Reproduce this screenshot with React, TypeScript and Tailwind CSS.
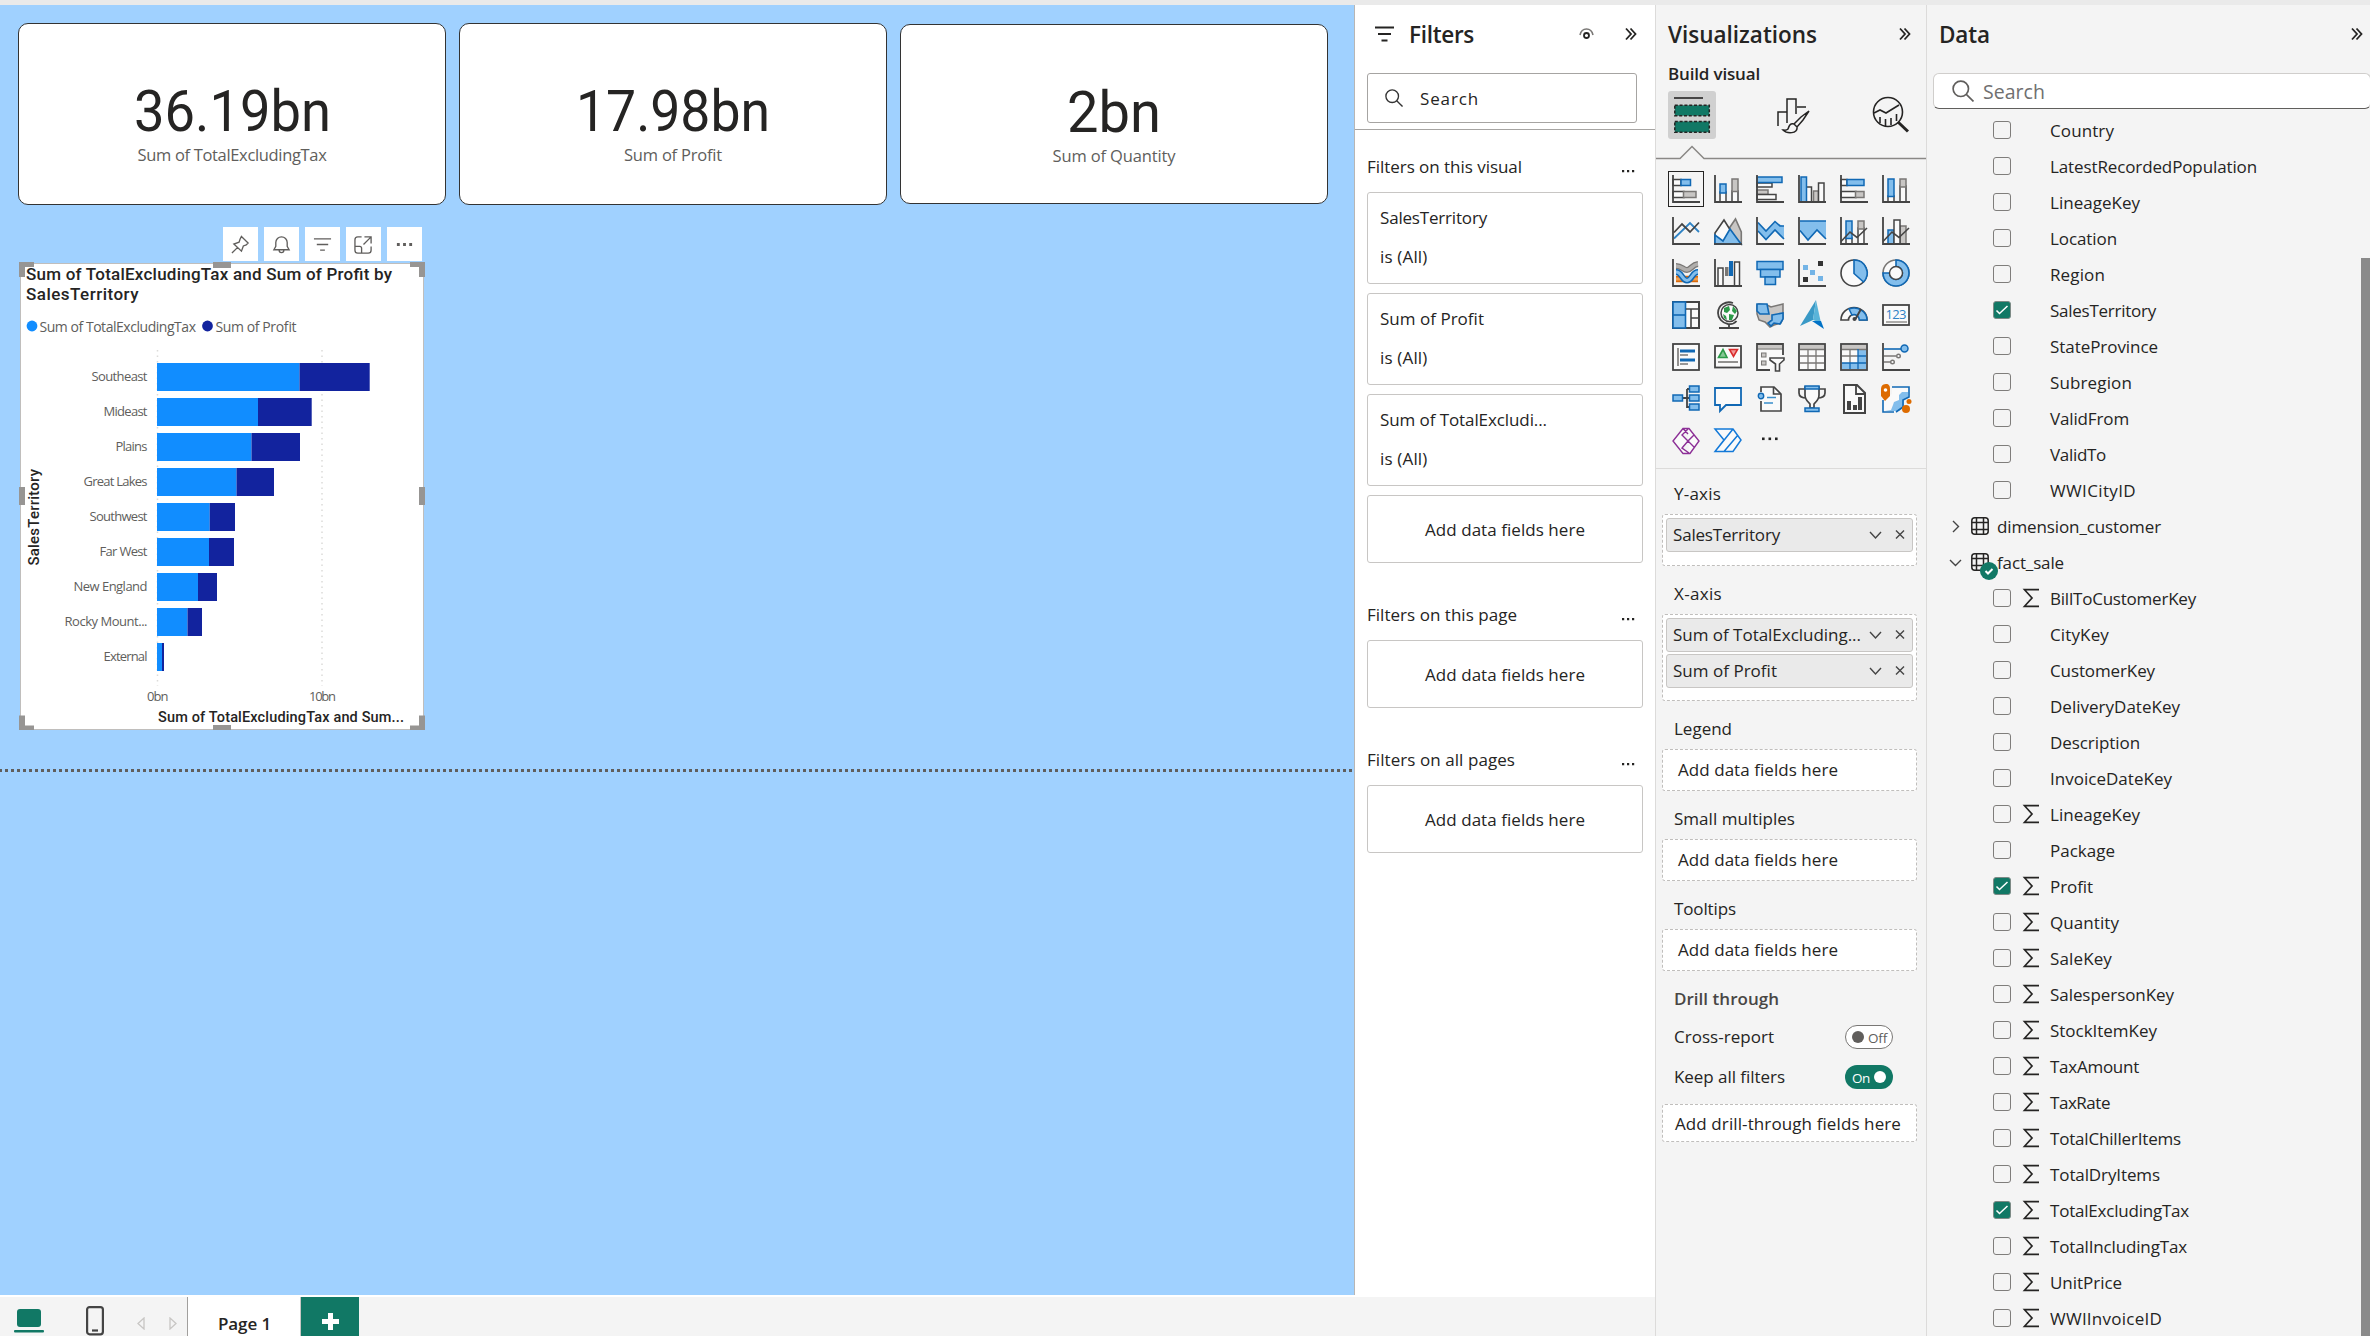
import React, { useLayoutEffect, useRef, useState } from "react";

type FitProps = { w: number; className?: string; stretch?: boolean; children: string };

/* Single-line text that is tracked (or stretched) to an exact width. */
function Fit({ w, className = "", stretch = false, children }: FitProps) {
  const ref = useRef<HTMLSpanElement>(null);
  const [style, setStyle] = useState<React.CSSProperties>({});
  useLayoutEffect(() => {
    const el = ref.current;
    if (!el) return;
    const natural = el.getBoundingClientRect().width;
    setStyle(
      stretch
        ? { transform: `scaleX(${w / natural})` }
        : { letterSpacing: `${(w - natural) / children.length}px` }
    );
  }, []);
  return (
    <span className={"inline-block whitespace-nowrap " + className} style={{ width: w }}>
      <span ref={ref} className="inline-block origin-left whitespace-nowrap" style={style}>
        {children}
      </span>
    </span>
  );
}

const K = "#444444";
const BF = "#83beec";
const BS = "#1068b4";
const GF = "#c8c6c4";
const GS = "#797775";
const W = "#fafafa";

const Axis = () => <path d="M1 0V27H28" fill="none" stroke={K} strokeWidth="1.8" />;
type RP = { b: [number, number, number, number]; c?: "w" | "b" | "g" };
const R = ({ b, c = "w" }: RP) => (
  <rect
    x={b[0]}
    y={b[1]}
    width={b[2]}
    height={b[3]}
    fill={c === "b" ? BF : c === "g" ? GF : W}
    stroke={c === "b" ? BS : c === "g" ? GS : K}
    strokeWidth="1.5"
  />
);
const P = ({ d, f = "none", s = K, sw = 1.6 }: { d: string; f?: string; s?: string; sw?: number }) => (
  <path d={d} fill={f} stroke={s} strokeWidth={sw} />
);

const visualIcons: React.ReactNode[] = [
  <><R b={[1, 4.5, 8, 6]} /><R b={[9, 4.5, 9.5, 6]} c="b" /><R b={[1, 16.5, 11, 6]} /><R b={[11.5, 16.5, 12.5, 6]} c="g" /><Axis /></>,
  <><R b={[6, 17, 6, 10]} /><R b={[6, 9, 6, 9]} c="b" /><R b={[18, 16, 6, 11]} /><R b={[18, 4, 6, 12.5]} c="g" /><Axis /></>,
  <><R b={[1, 8, 15, 4]} /><R b={[1, 2, 25, 5.5]} c="b" /><R b={[1, 15, 11, 4.5]} c="g" /><R b={[1, 19.5, 19, 5]} /><Axis /></>,
  <><R b={[8, 12, 5.5, 15]} /><R b={[3, 2, 5.5, 25]} c="b" /><R b={[15.5, 16, 5, 11]} c="g" /><R b={[20.5, 8, 5.5, 19]} /><Axis /></>,
  <><R b={[1, 4.5, 6, 6]} /><R b={[7, 4.5, 17, 6]} c="b" /><R b={[1, 16.5, 15, 6]} /><R b={[15.5, 16.5, 8.5, 6]} c="g" /><Axis /></>,
  <><R b={[6, 21, 6, 6]} /><R b={[6, 4, 6, 17.5]} c="b" /><R b={[18, 11, 6, 16]} /><R b={[18, 4, 6, 8]} c="g" /><Axis /></>,
  <><P d="M2 21.5 18 6l9 9" s="#2f83c5" sw={1.8} /><P d="M2 15.5 10 7l8 8 9-9.500" sw={1.8} /><Axis /></>,
  <><P d="M14 13 21.500 2 27.300 15V27Z" f={GF} s={GS} /><P d="M1 27V16L10 3 25 27Z" f={W} /><P d="M1 27V18l8 6 7-12 11 15Z" f={BF} s={BS} /><P d="M0 27H28" sw={1.8} /></>,
  <><path d="M2 6 10 14 19 5 28 9.500V22L19 13l-9 9.500L2 14Z" fill={BF} /><P d="M2 5.500 10 14 19 4.500 24 9h4M2 14l8 8.500L19 13l9 9" s={BS} /><Axis /></>,
  <><path d="M2 4H28V22L19 13l-9 10L2 14Z" fill={BF} /><P d="M2 4H28M2 13.500 10 23 19 13l9 9" s={BS} /><Axis /></>,
  <><R b={[6, 21, 6, 6]} /><R b={[6, 4, 6, 17.5]} c="b" /><R b={[18, 11, 6, 16]} /><R b={[18, 4, 6, 8]} c="g" /><P d="M1 24.500 10 15l7 5.500L27 11" /><Axis /></>,
  <><R b={[6, 13, 6, 14]} c="b" /><R b={[18, 9, 6, 18]} c="g" /><R b={[12, 3, 6, 24]} /><P d="M1 24.500 10 15l7 5.500L27 11" /><Axis /></>,
  <><P d="M4 20H26" s="#d9690a" sw={6.5} /><P d="M4 20H26" s="#f0a050" sw={3} /><P d="M4 7C10 7 11 11 15 11S20 5.500 26 5" s={GS} sw={6} /><P d="M4 7C10 7 11 11 15 11S20 5.500 26 5" s="#b0aeac" sw={3.5} /><P d="M4 13C10 13 10 21.500 15 21.500S20 13 26 13" s={BS} sw={6} /><P d="M4 13C10 13 10 21.500 15 21.500S20 13 26 13" s={BF} sw={3} /><Axis /></>,
  <><R b={[4, 9, 5, 18]} /><rect x="11" y="8" width="3.500" height="9" fill={GS} /><rect x="15" y="2" width="4" height="15" fill={BS} /><R b={[20.5, 3, 5, 24]} /><Axis /></>,
  <><R b={[1, 2.5, 26, 8]} c="b" /><R b={[4.5, 10.5, 19.5, 7.5]} c="b" /><R b={[9, 18, 10.5, 7.5]} c="b" /></>,
  <><rect x="5" y="6" width="5" height="5" fill="#74b4e6" /><rect x="12" y="11" width="5" height="5" fill="#74b4e6" /><rect x="20" y="17" width="5" height="5" fill="#74b4e6" /><rect x="20" y="2" width="5" height="5" fill="#333" /><rect x="5" y="18" width="5" height="5" fill="#333" /><Axis /></>,
  <><circle cx="14" cy="14" r="13" fill={W} stroke={K} strokeWidth="1.6" /><P d="M14 1A13 13 0 0 1 23.500 23L14 14.500Z" f={BF} s={BS} /></>,
  <><circle cx="14" cy="14" r="13" fill={W} stroke={GS} strokeWidth="1.6" /><P d="M14 1A13 13 0 1 1 1 14H7.500A6.500 6.500 0 1 0 14 7.500Z" f={BF} s={BS} /><circle cx="14" cy="14" r="6.500" fill={W} stroke={K} strokeWidth="1.400" /></>,
  <><rect x="1" y="1" width="26" height="26" fill={W} stroke={K} strokeWidth="2" /><rect x="1" y="1" width="12.500" height="26" fill={BF} stroke={BS} strokeWidth="1.600" /><P d="M1 14H13" s={BS} /><P d="M14 8H27M19 8V27M19 17H27" /></>,
  <><circle cx="15.500" cy="12" r="8.500" fill={W} stroke={K} strokeWidth="1.500" /><path d="M10 7l5-2 1 4-3 3-3-1zM19 5l4 5-2 3-3-3zM15 13l5 1-2 5h-3zM9 13l3 2 1 4-3-2z" fill="#2c9a48" /><P d="M19 2C12-.500 4 4 4 12c0 5 4 10 10 11 4 .500 7-1 8.500-3M15 23v3M5 27H25" sw={1.8} /></>,
  <><path d="M1 4 3 3 11 4 15 6 27 3V17L25 22 18 24 14 26 9 21 3 19 1 13Z" fill={GF} stroke={GS} strokeWidth="1.500" /><P d="M1 3H11L13 13H4L1 10Z" f={BF} s={BS} /><P d="M16 14 27 12V18L24 23 18 22 15 25 12 22 16 19Z" f={BF} s={BS} /></>,
  <><path d="M18-1 2 25 15 19Z" fill="#3999c6" /><path d="M18-1 15 19 23 22Z" fill="#59b4d9" /><path d="M14 20 23 20 26 28Z" fill="#0072c6" /></>,
  <><path d="M1 19A13 12.500 0 0 1 27 19H19.500A5.500 5.500 0 0 0 8.500 19Z" fill={W} stroke={K} strokeWidth="1.700" /><path d="M9 8A13 12 0 0 1 27 19H19.500A5.500 5.500 0 0 0 12 14Z" fill={BF} stroke={BS} strokeWidth="1.500" /><path d="M21 8 15.500 18" stroke={K} strokeWidth="2" /><circle cx="14.500" cy="18" r="2" fill={K} /></>,
  <><rect x="1" y="4" width="26" height="20" fill={W} stroke={K} strokeWidth="1.800" /><text x="3.500" y="18" fontSize="13" textLength="21" fontFamily="Open Sans, sans-serif" fill="#2f83c5">123</text><P d="M4 21H25" s={GS} sw={1.2} /></>,
  <><rect x="1" y="1" width="26" height="26" fill={W} stroke={K} strokeWidth="1.800" /><P d="M6 5V23" s={GS} /><P d="M8 8H23M8 17H23" s={BS} sw={3} /><P d="M8 12H16M8 21H16" s={GS} /></>,
  <><rect x="1" y="3" width="26" height="21.500" fill={W} stroke={K} strokeWidth="1.800" /><P d="M4.500 14.500 9 6.500 13 14.500Z" f="#86c795" s="#2c9a48" /><P d="M15.500 6.500H23.500L19.500 13.500Z" f="#f19a9a" s="#d92b2b" /><P d="M4 19H24" s={GS} /></>,
  <><path d="M14 27H1V1H27V12" fill={W} stroke={K} strokeWidth="1.800" /><rect x="2" y="2" width="24" height="3.500" fill={GF} /><P d="M2 6H26" s={GS} sw={1.2} /><rect x="5.500" y="10" width="4.500" height="4" fill={GF} stroke={GS} /><rect x="5.500" y="18" width="4.500" height="4" fill={GF} stroke={GS} /><P d="M14 15H28V17L23.500 21V28H19.500V21L14 17Z" f={W} /></>,
  <><rect x="1" y="1" width="26" height="26" fill={W} stroke={K} strokeWidth="1.800" /><rect x="2" y="2" width="24" height="4" fill={GF} /><P d="M2 6.500H26M2 13H26M2 20H26M10 6V26M18 6V26" s={GS} sw={1.3} /></>,
  <><rect x="1" y="1" width="26" height="26" fill={W} stroke={K} strokeWidth="1.800" /><rect x="2" y="2" width="24" height="4" fill={GF} /><path d="M18 6.500H26V26H2V20H18Z" fill={BF} /><P d="M2 6.500H26M2 13H18M10 6V20" s={GS} sw={1.3} /><P d="M18 6V26M2 20H26M18 13H26M10 20V26" s={BS} sw={1.3} /></>,
  <><P d="M2 6H19" s={BS} /><circle cx="22.500" cy="5.500" r="3.500" fill={BF} stroke={BS} strokeWidth="1.500" /><P d="M2 13H14M2 19H9" s={GS} /><circle cx="16.500" cy="13" r="1.800" fill={W} stroke={GS} strokeWidth="1.400" /><circle cx="10.500" cy="19" r="1.800" fill={W} stroke={GS} strokeWidth="1.400" /><Axis /></>,
  <><P d="M10 13H17M15 4V23M15 4H18M15 22H18" sw={1.8} /><R b={[1, 10, 9.5, 6]} c="b" /><R b={[17.5, 1, 9.5, 6]} c="b" /><R b={[17.5, 10, 9.5, 6]} c="b" /><R b={[17.5, 19, 9.5, 6]} c="b" /></>,
  <P d="M1 3H27V20H12L6 26V20H1Z" f={W} s={BS} sw={1.8} />,
  <><path d="M5 7V2H18L25 9V26H5V16" fill={W} stroke={K} strokeWidth="1.700" /><P d="M17.500 2V9H25" /><circle cx="5" cy="11" r="2.700" fill={BF} stroke={BS} strokeWidth="1.400" /><P d="M11 12.500H20M8 18H17" s="#3a8ecb" /></>,
  <><P d="M8 4H1V8C1 12 4 13 9 13M20 4H27V8C27 12 24 13 19 13" sw={1.7} /><P d="M7 2H21V10C21 16 16 18 16 19V23H12V19C12 18 7 16 7 10Z" f={W} sw={1.7} /><R b={[7, 1, 14, 3]} c="b" /><R b={[7, 23, 14, 3.5]} c="b" /></>,
  <><path d="M4 0H17L25 8V28H4Z" fill={W} stroke={K} strokeWidth="2" /><P d="M16 0V9H25" sw={1.8} /><path d="M7 16h4v9H7zM13 20h4v5h-4zM18 12h4v13h-4z" fill={K} /></>,
  <><path d="M1 14V27H14L18 25V17L22 14V9L27 6V1H10V9Z" fill={W} /><path d="M11 20 12 17 17 15V10L20 7H26V12L22 15V22L17 26H3L9 25Z" fill={BF} /><P d="M1 15V27H12M10 2H27V12L21 15V22L14 27" s={BS} /><path d="M4-1C0-1-1 2-1 4V11L3 16 8 11V4C8 1 7-1 4-1Z" fill="#dd6b00" /><circle cx="3.500" cy="5" r="1.800" fill="#fff" /><circle cx="27" cy="16.500" r="2.500" fill="#dd6b00" /><circle cx="24" cy="24" r="4" fill="#dd6b00" /></>,
  <P d="M11 1.500H17L27 14 18 26.500H11L1 14ZM16 2 10 8 16 14 10 21 17 26M10 8 22 20M10 21 16 14 22 8M11 1.500 16 7" f={W} s="#8c2f96" sw={1.4} />,
  <P d="M1 2H19L27 13 19 24.500H1L10 13ZM19 2 1 24.500M24 8 10 24.500" f={W} s="#1379d8" sw={1.5} />,
  <><rect x="6" y="10.500" width="2.600" height="2.600" fill="#222" /><rect x="12.500" y="10.500" width="2.600" height="2.600" fill="#222" /><rect x="19" y="10.500" width="2.600" height="2.600" fill="#222" /></>,
];

function Chevrons() {
  return (
    <svg width="12" height="14" viewBox="0 0 12 14" fill="none" stroke="#252423" strokeWidth="1.8">
      <path d="M1 1.500 6 7 1 12.500M5.500 1.500 10.500 7 5.500 12.500" />
    </svg>
  );
}

function SearchIcon({ size, color }: { size: number; color: string }) {
  return (
    <svg width={size} height={size} viewBox="0 0 20 20" fill="none" stroke={color} strokeWidth="1.5">
      <circle cx="8" cy="8" r="7" />
      <path d="M13 13 19.500 19.500" />
    </svg>
  );
}

function KpiCard({ value, vw, label, lw, className = "" }: { value: string; vw: number; label: string; lw: number; className?: string }) {
  return (
    <div className={"flex w-[428px] flex-col items-center rounded-[10px] border border-[#333] bg-white " + className}>
      <Fit w={vw} stretch className="mt-[57px] h-[60px] font-[Roboto,sans-serif] text-[58px] leading-[60px] text-[#252423]">{value}</Fit>
      <Fit w={lw} className="mt-[3px] text-[16.5px] leading-[22px] text-[#605e5c]">{label}</Fit>
    </div>
  );
}

const bars: [string, number, number, number][] = [
  ["Southeast", 56, 299.5, 369.7],
  ["Mideast", 44, 258, 311.7],
  ["Plains", 32, 251.5, 300],
  ["Great Lakes", 64, 236.5, 274],
  ["Southwest", 58, 209.7, 235],
  ["Far West", 48, 209, 234],
  ["New England", 74, 198, 217],
  ["Rocky Mount...", 83, 187.5, 202],
  ["External", 44, 162, 164],
];

function BarChart() {
  const din = "Roboto, sans-serif";
  const ui = "Open Sans, sans-serif";
  return (
    <svg width="406" height="468" viewBox="19 262 406 468" className="block">
      <rect x="20.500" y="263.500" width="403" height="466" fill="#fff" stroke="#c0bebc" />
      <g fill="#979593">
        <path d="M19 262h15v5h-9v10h-6zM425 262h-15v5h9v10h6zM19 731h15v-5.500h-9v-10h-6zM425 731h-15v-5.500h9v-10h6z" />
        <path d="M213 262h18v6h-18zM213 725h18v6h-18zM19 487h6v18h-6zM419 487h6v18h-6z" />
      </g>
      <g fontFamily={din} fill="#252423" fontWeight="500">
        <text x="26" y="280" fontSize="17" textLength="366">Sum of TotalExcludingTax and Sum of Profit by</text>
        <text x="26" y="300" fontSize="17" textLength="112.500">SalesTerritory</text>
        <text x="158" y="722" fontSize="14.500" textLength="246">Sum of TotalExcludingTax and Sum...</text>
        <text transform="translate(39 565.500) rotate(-90)" fontSize="15" textLength="96.500">SalesTerritory</text>
      </g>
      <circle cx="32" cy="326" r="5.400" fill="#118dff" />
      <circle cx="207.500" cy="326" r="5.400" fill="#12239e" />
      <path d="M157.500 350V686M322 350V686" stroke="#dcdbd9" strokeWidth="1.500" strokeDasharray="1.500 4" />
      <g fontFamily={ui} fill="#605e5c">
        <text x="39.500" y="331.500" fontSize="14" textLength="156.500">Sum of TotalExcludingTax</text>
        <text x="215.500" y="331.500" fontSize="14" textLength="81">Sum of Profit</text>
        {bars.map(([label, w], i) => (
          <text key={label} x={147.5 - w} y={381.3 + i * 35} fontSize="13" textLength={w}>{label}</text>
        ))}
        <text x="147" y="701" fontSize="13" textLength="21.500">0bn</text>
        <text x="309" y="701" fontSize="13" textLength="27">10bn</text>
      </g>
      {bars.map(([label, , a, b], i) => (
        <g key={label}>
          <rect x="157" y={363 + i * 35} width={a - 157} height="28" fill="#118dff" />
          <rect x={a} y={363 + i * 35} width={b - a} height="28" fill="#12239e" />
        </g>
      ))}
    </svg>
  );
}

const toolbar: React.ReactNode[] = [
  <path d="M1 19 7 13M11 1.500 18 8.500 16 10.500 13 11.500 11 17 3 9.500 8.500 7.500 9.500 4.500Z" />,
  <path d="M2 15.500H18L16 12V8A6 6 0 0 0 4 8V12ZM7.500 16A2.500 2.500 0 0 0 12.500 16" />,
  <path d="M1 4H19M4 10H16M7.500 16H12.500" />,
  <path d="M8 2H4Q1 2 1 5V16Q1 19 4 19H15Q18 19 18 16V12M1 12H6Q8 12 8 14V19M11 2H18V9M18 2 10 10" />,
  <path d="M2 10H5M8.500 10H11.500M15 10H18" strokeWidth="3" />,
];

function FilterCard({ name, w }: { name: string; w: number }) {
  return (
    <div className="mb-[9px] flex h-[92px] w-[276px] flex-col rounded-[3px] border border-[#c8c6c4] bg-white pl-[12px]">
      <Fit w={w} className="mt-[13px] h-[24px] leading-[24px]">{name}</Fit>
      <Fit w={47.5} className="mt-[15px] h-[24px] leading-[24px]">is (All)</Fit>
    </div>
  );
}

function AddBox() {
  return (
    <div className="flex h-[68px] w-[276px] items-center justify-center rounded-[3px] border border-[#c8c6c4] bg-white pt-px">
      <Fit w={160}>Add data fields here</Fit>
    </div>
  );
}

function FilterHeading({ text, w, className = "" }: { text: string; w: number; className?: string }) {
  return (
    <div className={"flex h-[24px] items-center justify-between pr-[20px] " + className}>
      <Fit w={w}>{text}</Fit>
      <svg width="13" height="3" viewBox="0 0 13 3" className="mt-[8px]"><path d="M0 0h2.200v2.200H0zM5 0h2.200v2.200H5zM10 0h2.200v2.200H10z" fill="#252423" /></svg>
    </div>
  );
}

function Pill({ text, w, className = "" }: { text: string; w: number; className?: string }) {
  return (
    <div className={"flex h-[34px] w-[247px] items-center rounded-[3px] border border-[#c8c6c4] bg-[#eaeaea] pr-[7px] pl-[6px] " + className}>
      <Fit w={w}>{text}</Fit>
      <svg width="36" height="12" viewBox="0 0 36 12" className="ml-auto" fill="none" stroke="#444" strokeWidth="1.400">
        <path d="M1 3 6.500 9 12 3M27 1.500 35 9.500M35 1.500 27 9.500" />
      </svg>
    </div>
  );
}

const dashed = "ml-[6px] w-[255px] rounded-[3px] border border-dashed border-[#c0bebc] bg-white";

function EmptyWell({ label, w }: { label: string; w: number }) {
  return (
    <>
      <Fit w={w} className="mt-[16px] ml-[18px] h-[24px] leading-[24px]">{label}</Fit>
      <div className={dashed + " mt-[8px] flex h-[42px] items-center pl-[15px]"}>
        <Fit w={160}>Add data fields here</Fit>
      </div>
    </>
  );
}

type Field = { n: string; w: number; on?: boolean; sum?: boolean };
const cityFields: Field[] = [
  { n: "Country", w: 64 },
  { n: "LatestRecordedPopulation", w: 207 },
  { n: "LineageKey", w: 90 },
  { n: "Location", w: 67 },
  { n: "Region", w: 55 },
  { n: "SalesTerritory", w: 106, on: true },
  { n: "StateProvince", w: 108 },
  { n: "Subregion", w: 82 },
  { n: "ValidFrom", w: 79 },
  { n: "ValidTo", w: 56 },
  { n: "WWICityID", w: 86 },
];
const saleFields: Field[] = [
  { n: "BillToCustomerKey", w: 146, sum: true },
  { n: "CityKey", w: 59 },
  { n: "CustomerKey", w: 105 },
  { n: "DeliveryDateKey", w: 130 },
  { n: "Description", w: 90 },
  { n: "InvoiceDateKey", w: 122 },
  { n: "LineageKey", w: 90, sum: true },
  { n: "Package", w: 65 },
  { n: "Profit", w: 43, sum: true, on: true },
  { n: "Quantity", w: 69, sum: true },
  { n: "SaleKey", w: 62, sum: true },
  { n: "SalespersonKey", w: 124, sum: true },
  { n: "StockItemKey", w: 107, sum: true },
  { n: "TaxAmount", w: 89, sum: true },
  { n: "TaxRate", w: 60, sum: true },
  { n: "TotalChillerItems", w: 131, sum: true },
  { n: "TotalDryItems", w: 110, sum: true },
  { n: "TotalExcludingTax", w: 139, sum: true, on: true },
  { n: "TotalIncludingTax", w: 137, sum: true },
  { n: "UnitPrice", w: 72, sum: true },
  { n: "WWIInvoiceID", w: 112, sum: true },
];

function FieldRow({ f }: { f: Field }) {
  return (
    <div className="flex h-[36px] shrink-0 items-center pl-[66px]">
      {f.on ? (
        <div className="flex h-[18px] w-[18px] items-center justify-center rounded-[3px] border border-[#7d8a86] bg-[#117865]">
          <svg width="14" height="12" viewBox="0 0 14 12" fill="none" stroke="#fff" strokeWidth="1.500"><path d="M1.500 6.500 4.500 9.500 12.500 2" /></svg>
        </div>
      ) : (
        <div className="h-[18px] w-[18px] rounded-[3px] border border-[#7f7d7b]" />
      )}
      <div className="ml-[11px] w-[28px]">
        {f.sum && (
          <svg width="18" height="20" viewBox="0 0 18 20" fill="none" stroke="#252423" strokeWidth="1.700"><path d="M17 1.700H2.500L10 10 2.500 18.300H17" /></svg>
        )}
      </div>
      <Fit w={f.w} className="mt-[2px]">{f.n}</Fit>
    </div>
  );
}

function TableRow({ name, w, open = false }: { name: string; w: number; open?: boolean }) {
  return (
    <div className="flex h-[36px] shrink-0 items-center pl-[22px]">
      <svg width="13" height="13" viewBox="0 0 13 13" fill="none" stroke="#444" strokeWidth="1.400">
        <path d={open ? "M1 4 6.500 9.500 12 4" : "M4 1 9.500 6.500 4 12"} />
      </svg>
      <div className="relative ml-[9px] h-[18px] w-[18px]">
        <svg width="18" height="18" viewBox="0 0 18 18" fill="none" stroke="#252423" strokeWidth="1.500"><rect x=".8" y=".8" width="16.400" height="16.400" rx="3" /><path d="M5.500 1V17M12.500 1V17M1 5.500H17M1 12.500H17" /></svg>
        {open && (
          <svg width="18" height="18" viewBox="0 0 18 18" className="absolute top-[9px] left-[9px]"><circle cx="9" cy="9" r="9" fill="#117865" /><path d="M5.500 9 8 11.500 12.500 7" fill="none" stroke="#fff" strokeWidth="2" /></svg>
        )}
      </div>
      <Fit w={w} className="mt-[2px] ml-[8px]">{name}</Fit>
    </div>
  );
}

export default function App() {
  return (
    <div className="flex h-[1336px] w-[2370px] flex-col overflow-hidden bg-[#f4f4f4] font-['Open_Sans',sans-serif] text-[17px] leading-[24px] text-[#252423]">
      <div className="h-[5px] shrink-0 bg-[#eaeaea]" />
      <div className="flex min-h-0 flex-1">
        <div className="flex w-[1655px] flex-col">
          <div className="flex h-[1290px]">
            <main className="flex w-[1354px] flex-col bg-[#a0d1ff]">
              <div className="mt-[18px] ml-[18px] flex h-[182px] gap-[13px]">
                <KpiCard value="36.19bn" vw={197} label="Sum of TotalExcludingTax" lw={189} />
                <KpiCard value="17.98bn" vw={194} label="Sum of Profit" lw={98} />
                <KpiCard value="2bn" vw={94} label="Sum of Quantity" lw={123} className="mt-px mb-px" />
              </div>
              <div className="mt-[22px] ml-[223px] flex gap-[6px]">
                {toolbar.map((icon, i) => (
                  <div key={i} className="flex h-[34px] w-[35px] items-center justify-center bg-white pt-px">
                    <svg width="19" height="19" viewBox="0 0 20 20" fill="none" stroke="#605e5c" strokeWidth="1.400">{icon}</svg>
                  </div>
                ))}
              </div>
              <div className="mt-[1px] ml-[19px]"><BarChart /></div>
              <div className="mt-[39px] h-[3px] bg-[repeating-linear-gradient(90deg,#605e5c_0_2px,transparent_2px_5px,#605e5c_5px_6px)]" />
            </main>
            <aside className="flex w-[301px] flex-col border-l border-[#b8b6b4] bg-white pl-[12px]">
              <div className="mt-[12px] flex h-[34px] items-center">
                <svg width="19" height="16" viewBox="0 0 19 16" className="ml-[8px]" stroke="#252423" strokeWidth="2"><path d="M0 1.500H19M3 8H16M6.500 14.500H12.500" /></svg>
                <Fit w={65} className="mt-[2px] ml-[15px] text-[22.5px] font-semibold">Filters</Fit>
                <svg width="15" height="12" viewBox="0 0 15 12" fill="none" className="ml-[105px]"><path d="M1 7C2 2.500 5 1 7.500 1S13 2.500 14 7" stroke="#797775" strokeWidth="1.600" /><circle cx="7.500" cy="7.500" r="2.500" stroke="#252423" strokeWidth="1.800" /></svg>
                <div className="ml-[31px]"><Chevrons /></div>
              </div>
              <div className="mt-[22px] flex h-[50px] w-[270px] items-center rounded-[3px] border border-[#a6a4a2] pl-[17px]">
                <SearchIcon size={18} color="#333" />
                <Fit w={59} className="mt-[2px] ml-[17px]">Search</Fit>
              </div>
              <div className="mt-[6px] -ml-[12px] h-px bg-[#a6a4a2]" />
              <FilterHeading text="Filters on this visual" w={155} className="mt-[25px]" />
              <div className="h-[13px]" />
              <FilterCard name="SalesTerritory" w={107} />
              <FilterCard name="Sum of Profit" w={104} />
              <FilterCard name="Sum of TotalExcludi..." w={167} />
              <AddBox />
              <FilterHeading text="Filters on this page" w={150} className="mt-[40px]" />
              <div className="h-[13px]" />
              <AddBox />
              <FilterHeading text="Filters on all pages" w={148} className="mt-[40px]" />
              <div className="h-[13px]" />
              <AddBox />
            </aside>
          </div>
          <div className="h-[2px] bg-white" />
          <footer className="flex h-[39px]">
            <div className="flex w-[188px] items-start border-r border-[#a19f9d]">
              <svg width="30" height="24" viewBox="0 0 30 24" className="mt-[12px] ml-[14px]" fill="#117865"><rect x="3" y="0" width="24" height="18" rx="3" /><rect x="0" y="21" width="30" height="2.500" rx="1" /></svg>
              <svg width="18" height="30" viewBox="0 0 18 30" className="mt-[9px] ml-[42px]" fill="none" stroke="#444" strokeWidth="2.200"><rect x="1.100" y="1.100" width="15.800" height="27.200" rx="2.500" /><path d="M6 24.500H12" /></svg>
              <svg width="8" height="13" viewBox="0 0 8 13" className="mt-[20px] ml-[33px]" fill="none" stroke="#c8c6c4" strokeWidth="1.300"><path d="M7 1V12L1 6.500Z" /></svg>
              <svg width="8" height="13" viewBox="0 0 8 13" className="mt-[20px] ml-[24px]" fill="none" stroke="#c8c6c4" strokeWidth="1.300"><path d="M1 1V12L7 6.500Z" /></svg>
            </div>
            <div className="w-[113px] border-r border-[#c8c6c4] bg-white pt-[15px] pl-[30px]">
              <Fit w={53} className="font-semibold">Page 1</Fit>
            </div>
            <div className="w-[58px] bg-[#117865] pt-[16px] pl-[21px]">
              <svg width="17" height="17" viewBox="0 0 17 17"><path d="M6 0h5v6h6v5h-6v6H6v-6H0V6h6z" fill="#fff" /></svg>
            </div>
          </footer>
        </div>

        <aside className="flex w-[271px] flex-col border-l border-[#dcdbda]">
          <div className="mt-[12px] flex h-[34px] items-center justify-between pr-[15px] pl-[12px]">
            <Fit w={149} className="mt-[2px] text-[22.5px] font-semibold">Visualizations</Fit>
            <Chevrons />
          </div>
          <Fit w={92} className="mt-[11px] ml-[12px] h-[24px] font-semibold">Build visual</Fit>
          <div className="mt-[5px] flex items-start pl-[12px]">
            <div className="h-[48px] w-[48px] rounded-[3px] bg-[#d0d0d0]">
              <svg width="48" height="48" viewBox="0 0 48 48"><path d="M6 7H35" stroke="#252423" strokeWidth="1.600" /><g fill="#117865" stroke="#252423" strokeWidth="1.500" strokeDasharray="3 1.800"><rect x="6.800" y="14.300" width="34.500" height="10.400" /><rect x="6.800" y="30.500" width="34.500" height="10.700" /></g></svg>
            </div>
            <svg width="36" height="38" viewBox="0 0 36 38" className="mt-[5px] ml-[59px]" fill="none" stroke="#252423" strokeWidth="1.500">
              <path d="M3 30V16H12V27M12 16V3H21V18M22 11H31M34 15 26 21 19 28 22 31 28 24ZM19 28C15 27 14 30 13 33 11 35 9 34 8 34 12 38 23 38 22 31" />
            </svg>
            <svg width="38" height="38" viewBox="0 0 38 38" className="mt-[4px] ml-[60px]" fill="none" stroke="#252423" strokeWidth="1.600">
              <circle cx="17" cy="17" r="14.500" /><path d="M3 18 9 15 15 18 28 10M9 22V28M14.500 24V31M20 23V30M25.500 19V26" /><path d="M27 27 37 36.500" strokeWidth="3" />
            </svg>
          </div>
          <svg width="270" height="15" viewBox="0 0 270 15" className="mt-[6px] block" fill="none" stroke="#8a8886" strokeWidth="1.500"><path d="M0 13.500H24L36 1.500 48 13.500H270" /></svg>
          <div className="mt-[11px] ml-[12px] grid w-[246px] grid-cols-6 gap-[6px]">
            {visualIcons.map((icon, i) => (
              <div key={i} className={"flex h-[36px] w-[36px] items-center justify-center border " + (i === 0 ? "border-[#252423]" : "border-transparent")}>
                <svg width="28" height="28" viewBox="0 0 28 28" overflow="visible">{icon}</svg>
              </div>
            ))}
          </div>
          <div className="mt-[9px] h-px bg-[#dcdbda]" />

          <Fit w={47} className="mt-[13px] ml-[18px] h-[24px]">Y-axis</Fit>
          <div className={dashed + " mt-[8px] h-[52px] px-[3px] pt-[3px]"}>
            <Pill text="SalesTerritory" w={107} />
          </div>
          <Fit w={48} className="mt-[16px] ml-[18px] h-[24px]">X-axis</Fit>
          <div className={dashed + " mt-[8px] h-[87px] px-[3px] pt-[3px]"}>
            <Pill text="Sum of TotalExcluding..." w={188} />
            <Pill text="Sum of Profit" w={104} className="mt-[2px]" />
          </div>
          <EmptyWell label="Legend" w={58} />
          <EmptyWell label="Small multiples" w={121} />
          <EmptyWell label="Tooltips" w={62} />
          <Fit w={105} className="mt-[16px] ml-[18px] h-[24px] font-semibold text-[#484644]">Drill through</Fit>
          <div className="mt-[14px] flex h-[24px] items-center pr-[33px] pl-[18px]">
            <Fit w={100}>Cross-report</Fit>
            <div className="ml-auto flex h-[24px] w-[48px] items-center rounded-full border border-[#797775] bg-white pl-[6px] text-[#605e5c]">
              <div className="h-[12px] w-[12px] rounded-full bg-[#605e5c]" />
              <Fit w={19} className="mt-px ml-[4px] text-[13.5px]">Off</Fit>
            </div>
          </div>
          <div className="mt-[16px] flex h-[24px] items-center pr-[33px] pl-[18px]">
            <Fit w={111}>Keep all filters</Fit>
            <div className="ml-auto flex h-[24px] w-[48px] items-center rounded-full bg-[#117865] pl-[7px] text-white">
              <Fit w={18} className="mt-px text-[13.5px]">On</Fit>
              <div className="ml-[4px] h-[12px] w-[12px] rounded-full bg-white" />
            </div>
          </div>
          <div className={dashed + " mt-[15px] flex h-[38px] items-center pt-px pl-[12px]"}>
            <Fit w={226}>Add drill-through fields here</Fit>
          </div>
        </aside>

        <aside className="flex flex-1 flex-col border-l border-[#dcdbda]">
          <div className="mt-[12px] flex h-[34px] items-center justify-between pr-[8px] pl-[12px]">
            <Fit w={51} className="mt-[2px] text-[22.5px] font-semibold">Data</Fit>
            <Chevrons />
          </div>
          <div className="mt-[22px] ml-[6px] flex h-[36px] w-[438px] shrink-0 items-center rounded-[6px] border border-[#d0cecc] border-b-[#605e5c] bg-white pl-[18px]">
            <SearchIcon size={22} color="#605e5c" />
            <Fit w={62} className="mt-[2px] ml-[9px] text-[19.5px] text-[#707070]">Search</Fit>
          </div>
          <div className="flex min-h-0 flex-1">
            <div className="flex flex-1 flex-col pt-[3px]">
              {cityFields.map((f) => <FieldRow key={f.n} f={f} />)}
              <TableRow name="dimension_customer" w={164} />
              <TableRow name="fact_sale" w={67} open />
              {saleFields.map((f) => <FieldRow key={f.n} f={f} />)}
            </div>
            <div className="mt-[149px] w-[10px] bg-[#8a8a8a]" />
          </div>
        </aside>
      </div>
    </div>
  );
}
